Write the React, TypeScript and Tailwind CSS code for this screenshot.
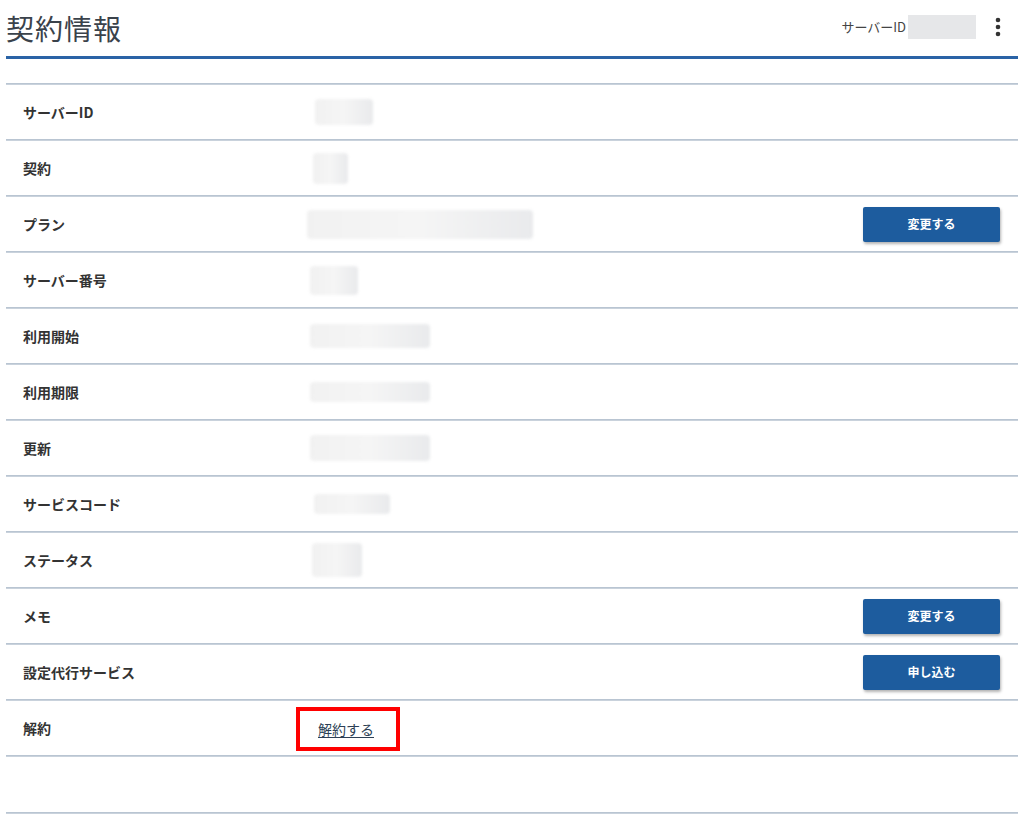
import { ReactNode } from 'react';

type Row = {
  label: string;
  blur?: { ml: string; w: string; h: string };
  button?: string;
  link?: boolean;
};

const rows: Row[] = [
  { label: 'サーバーID', blur: { ml: 'ml-[8px]', w: 'w-[58px]', h: 'h-[26px]' } },
  { label: '契約', blur: { ml: 'ml-[6px]', w: 'w-[35px]', h: 'h-[31px]' } },
  { label: 'プラン', blur: { ml: 'ml-0', w: 'w-[226px]', h: 'h-[29px]' }, button: '変更する' },
  { label: 'サーバー番号', blur: { ml: 'ml-[3px]', w: 'w-[48px]', h: 'h-[29px]' } },
  { label: '利用開始', blur: { ml: 'ml-[3px]', w: 'w-[120px]', h: 'h-[24px]' } },
  { label: '利用期限', blur: { ml: 'ml-[3px]', w: 'w-[120px]', h: 'h-[20px]' } },
  { label: '更新', blur: { ml: 'ml-[3px]', w: 'w-[120px]', h: 'h-[26px]' } },
  { label: 'サービスコード', blur: { ml: 'ml-[7px]', w: 'w-[76px]', h: 'h-[20px]' } },
  { label: 'ステータス', blur: { ml: 'ml-[5px]', w: 'w-[50px]', h: 'h-[34px]' } },
  { label: 'メモ', button: '変更する' },
  { label: '設定代行サービス', button: '申し込む' },
  { label: '解約', link: true },
];

function Line() {
  return <div className="h-[2px] bg-[#c9d2dc] border-t border-[#b9c5d2]" />;
}

function Blur({ ml, w, h }: { ml: string; w: string; h: string }) {
  return (
    <div
      className={`${ml} ${w} ${h} bg-gradient-to-r from-[#f1f1f1] via-[#f5f5f5] to-[#e9eaec] blur-[1.5px] rounded-sm`}
    />
  );
}

function Cell({ children }: { children: ReactNode }) {
  return <div className="flex-1 flex items-center">{children}</div>;
}

export default function App() {
  return (
    <div
      className="w-[1024px] h-[818px] bg-white px-[6px] text-[#333]"
      style={{ fontFamily: '"Noto Sans CJK JP", "Noto Sans", sans-serif' }}
    >
      <header className="flex items-center justify-between h-[56px] pb-[2px]">
        <h1 className="text-[28px] leading-none text-[#3a424b] tracking-[1px] pt-[1px]">
          契約情報
        </h1>
        <div className="flex items-center">
          <span className="text-[13px] text-[#444]">サーバーID</span>
          <div className="ml-[2px] w-[68px] h-[24px] bg-[#e6e7e9] blur-[0.5px]" />
          <svg width="6" height="20" viewBox="0 0 6 20" className="ml-[19px] mr-[17px]">
            <circle cx="3" cy="3" r="2.3" fill="#333" />
            <circle cx="3" cy="10" r="2.3" fill="#333" />
            <circle cx="3" cy="17" r="2.3" fill="#333" />
          </svg>
        </div>
      </header>
      <div className="h-[3px] bg-[#2a63a6]" />
      <div className="h-[24px]" />
      <Line />
      {rows.map((row) => (
        <div key={row.label}>
          <div className="flex items-center h-[54px]">
            <div className="w-[301px] pl-[17px] text-[14px] font-bold text-[#333]">
              {row.label}
            </div>
            <Cell>
              {row.blur && <Blur {...row.blur} />}
              {row.link && (
                <div className="-ml-[11px] mt-[2px] border-[4px] border-[#ff0000] w-[104px] h-[44px] flex items-center pl-[18px]">
                  <a href="#" className="text-[14px] text-[#2c3f55] underline underline-offset-2">
                    解約する
                  </a>
                </div>
              )}
            </Cell>
            {row.button && (
              <button className="mr-[18px] w-[137px] h-[35px] bg-[#1d5c9e] text-white text-[12px] font-bold rounded-[2px] shadow-[1px_2px_3px_rgba(0,0,0,0.3)]">
                {row.button}
              </button>
            )}
          </div>
          <Line />
        </div>
      ))}
      <div className="h-[55px]" />
      <Line />
    </div>
  );
}
